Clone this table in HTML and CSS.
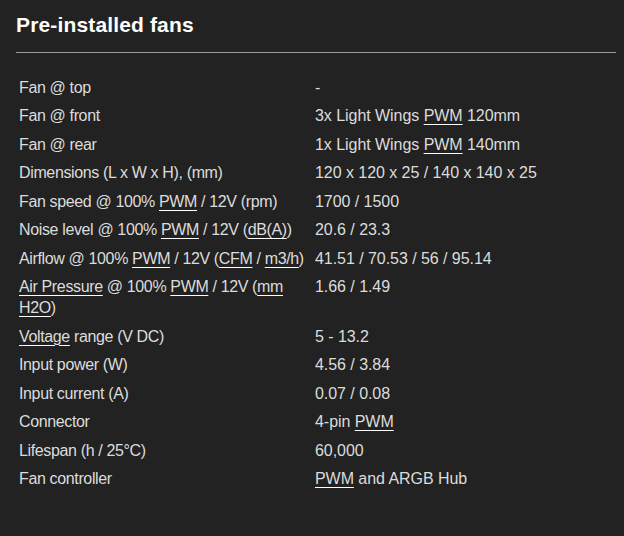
FILE: index.html
```html
<!DOCTYPE html>
<html>
<head>
<meta charset="utf-8">
<link rel="stylesheet" href="styles.css">
</head>
<body>
<section class="specs">
  <h2 class="title">Pre-installed fans</h2>
  <table class="spec-table">
    <tr><td class="label">Fan @ top</td><td class="value">-</td></tr>
    <tr><td class="label">Fan @ front</td><td class="value">3x Light Wings <u>PWM</u> 120mm</td></tr>
    <tr><td class="label">Fan @ rear</td><td class="value">1x Light Wings <u>PWM</u> 140mm</td></tr>
    <tr><td class="label">Dimensions (L x W x H), (mm)</td><td class="value">120 x 120 x 25 / 140 x 140 x 25</td></tr>
    <tr><td class="label">Fan speed @ 100% <u>PWM</u> / 12V (rpm)</td><td class="value">1700 / 1500</td></tr>
    <tr><td class="label">Noise level @ 100% <u>PWM</u> / 12V (<u>dB(A)</u>)</td><td class="value">20.6 / 23.3</td></tr>
    <tr><td class="label">Airflow @ 100% <u>PWM</u> / 12V (<u>CFM</u> / <u>m3/h</u>)</td><td class="value">41.51 / 70.53 / 56 / 95.14</td></tr>
    <tr><td class="label"><u>Air Pressure</u> @ 100% <u>PWM</u> / 12V (<u>mm H2O</u>)</td><td class="value">1.66 / 1.49</td></tr>
    <tr><td class="label"><u>Voltage</u> range (V DC)</td><td class="value">5 - 13.2</td></tr>
    <tr><td class="label">Input power (W)</td><td class="value">4.56 / 3.84</td></tr>
    <tr><td class="label">Input current (A)</td><td class="value">0.07 / 0.08</td></tr>
    <tr><td class="label">Connector</td><td class="value">4-pin <u>PWM</u></td></tr>
    <tr><td class="label">Lifespan (h / 25°C)</td><td class="value">60,000</td></tr>
    <tr><td class="label">Fan controller</td><td class="value"><u>PWM</u> and ARGB Hub</td></tr>
  </table>
</section>
</body>
</html>
```

FILE: styles.css
```css
html, body {
  margin: 0;
  padding: 0;
  background: #222222;
}
body {
  font-family: "Liberation Sans", Arial, sans-serif;
  color: #dcdcdc;
  width: 624px;
  height: 536px;
  overflow: hidden;
}
.specs {
  padding: 12px 8px 0 16px;
}
.title {
  margin: 0;
  font-size: 21px;
  line-height: 26px;
  font-weight: bold;
  letter-spacing: 0.15px;
  color: #ffffff;
  padding-bottom: 14px;
  border-bottom: 1px solid #9a9a9a;
}
.spec-table {
  margin-top: 20px;
  width: 100%;
  border-collapse: collapse;
  font-size: 16px;
  line-height: 21px;
}
.spec-table td {
  padding: 3.75px 3px;
  vertical-align: top;
}
.label {
  width: 290px;
  letter-spacing: -0.36px;
}
.value {
  letter-spacing: -0.05px;
}
u {
  text-decoration: underline;
  text-decoration-color: #ffffff;
  text-underline-offset: 3px;
  text-decoration-thickness: 1px;
}
```
